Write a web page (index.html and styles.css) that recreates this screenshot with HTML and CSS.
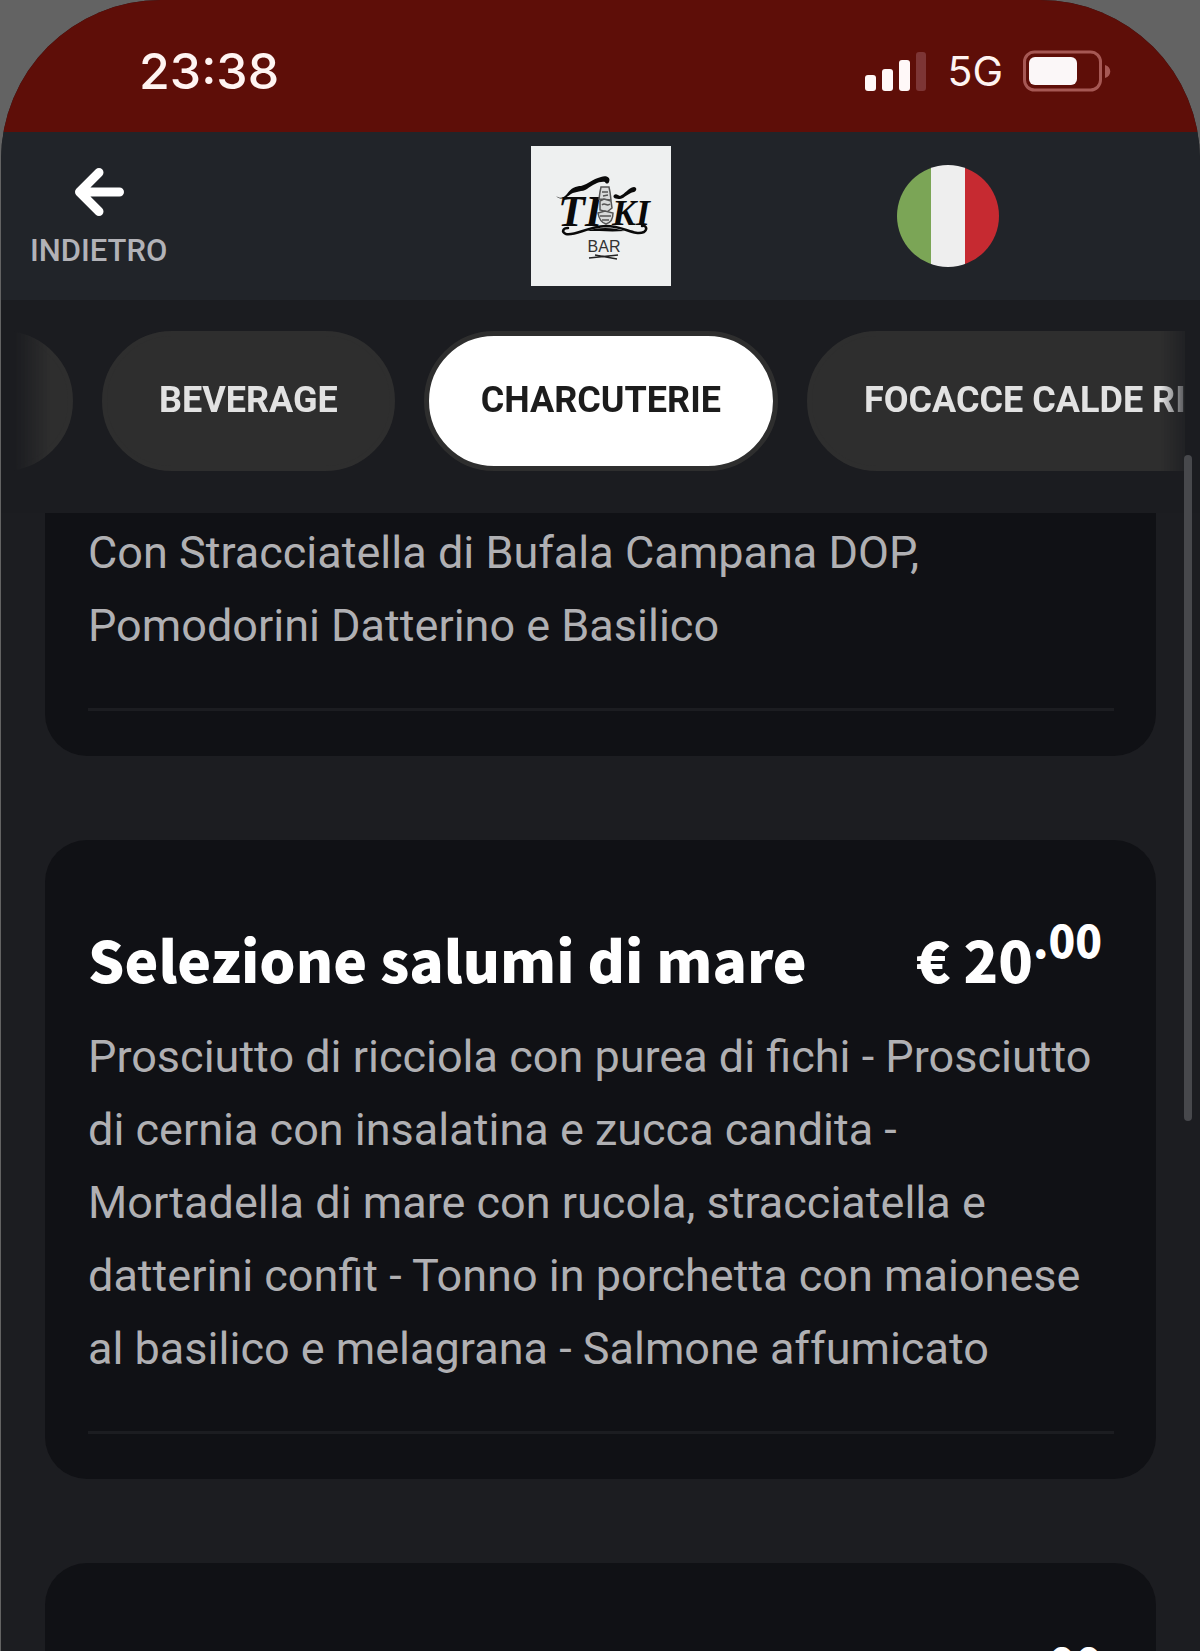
FILE: index.html
```
<!DOCTYPE html>
<html lang="it">
  <head>
    <meta charset="utf-8">
    <meta name="viewport" content="width=device-width, initial-scale=1">
    <title>Tiki Bar - Menu</title>
    <link rel="stylesheet" href="styles.css">
  </head>
  <body>
    <div class="screen">
      <div class="status-bar">
        <span class="status-time">23:38</span>
        <div class="status-icons">
          <svg class="signal" viewBox="0 0 62 40" aria-hidden="true">
            <rect x="0" y="24" width="11" height="16" rx="3" fill="#fff8f8"/>
            <rect x="17" y="18" width="11" height="22" rx="3" fill="#fff8f8"/>
            <rect x="34" y="9" width="11" height="31" rx="3" fill="#fff8f8"/>
            <rect x="51" y="1" width="10" height="39" rx="3" fill="#7d3535"/>
          </svg>
          <span class="network">5G</span>
          <svg class="battery" viewBox="0 0 88 42" aria-hidden="true">
            <rect x="1.5" y="2" width="76" height="38" rx="10" fill="none" stroke="#a65854" stroke-width="3"/>
            <rect x="6" y="7" width="48" height="28" rx="6" fill="#fbf7f8"/>
            <path d="M82 15c7 2 7 11 0 13z" fill="#a65854"/>
          </svg>
        </div>
      </div>

      <header class="header">
        <button class="back-btn">
          <svg class="back-icon" viewBox="0 0 50 50" aria-hidden="true">
            <path d="M25 5.500L5.500 25L25 44.500M7 25H45.500" fill="none" stroke="#fff" stroke-width="9" stroke-linecap="round" stroke-linejoin="round"/>
          </svg>
          <span>INDIETRO</span>
        </button>
        <a href="#" class="logo" aria-label="Tiki Bar">
          <svg viewBox="0 0 140 140">
            <rect width="140" height="140" fill="#eef0f0"/>
            <!-- lettering -->
            <g class="logo-letters">
              <text x="27" y="80" font-size="44">TI</text>
              <text x="81" y="79" font-size="36">KI</text>
            </g>
            <text class="logo-bar" x="73" y="106" font-size="16" text-anchor="middle">BAR</text>
            <!-- long brush over the T -->
            <path d="M25 50c4 3 8 2 11-2 4-6 9-8 14-8 8-2 11-7 20-9 6-2 10 1 8 5-1 2-3 2-4 0-6-1-12 3-18 7-5 3-11 2-16 5-5 4-10 7-15 2z" fill="#0a0a0a"/>
            <path d="M83 49c2-2 4 0 6 1 5-2 8-8 14-9 3 0 3 4 0 5-6 1-9 6-14 7-4 0-8-1-6-4z" fill="#0a0a0a"/>
            <!-- totem -->
            <g fill="#d8dada" stroke="#555" stroke-width="1.500">
              <path d="M70 41l8 0 1 5 1 8-12-1 1-7z"/>
              <path d="M69 55l4-2 7 2 1 7-5 4-7-2z"/>
              <path d="M67 67l7-2 8 2c0 6-3 10-7 11-4-1-7-5-8-11z"/>
              <path d="M71 46h6M72 50l5-1M71 59c3-3 5 2 8-1M69 70h11M71 74h7" fill="none"/>
            </g>
            <!-- brim -->
            <path d="M37 82c-5 0-7 4-2 6 10 2 20-7 40-8 18 0 28 10 38 6 4-3 2-7-2-6" fill="none" stroke="#0a0a0a" stroke-width="2.500" stroke-linecap="round"/>
            <path d="M56 85c10-4 26-4 38 0-12 1-26 0-38 0z" fill="#0a0a0a"/>
            <!-- sticks -->
            <path d="M58 112l29-3M64 109l22 4" stroke="#222" stroke-width="1.300" fill="none"/>
          </svg>
        </a>
        <button class="lang-btn" aria-label="Italiano"></button>
      </header>

      <nav class="categories">
        <div class="categories-track">
          <button class="pill pill-prev" aria-label="Categoria precedente"></button>
          <button class="pill">BEVERAGE</button>
          <button class="pill active">CHARCUTERIE</button>
          <button class="pill">FOCACCE CALDE RIPIENE</button>
        </div>
      </nav>

      <main class="menu-list">
        <article class="card card-first">
          <p class="description">Con Stracciatella di Bufala Campana DOP, Pomodorini Datterino e Basilico</p>
          <hr>
        </article>

        <article class="card">
          <div class="card-title">
            <h2>Selezione salumi di mare</h2>
            <span class="price">€ 20<sup>.00</sup></span>
          </div>
          <p class="description">Prosciutto di ricciola con purea di fichi - Prosciutto di cernia con insalatina e zucca candita - Mortadella di mare con rucola, stracciatella e datterini confit - Tonno in porchetta con maionese al basilico e melagrana - Salmone affumicato</p>
          <hr>
        </article>

        <article class="card">
          <div class="card-title">
            <span class="price">€ 20<sup>.00</sup></span>
          </div>
        </article>
      </main>

      <div class="scroll-thumb"></div>
    </div>
  </body>
</html>
```
FILE: styles.css
```
* {
  box-sizing: border-box;
}

body {
  margin: 0;
  background: #636363;
  font-family: Roboto, "Liberation Sans", sans-serif;
}

button {
  border: none;
  background: none;
  padding: 0;
  font-family: inherit;
  cursor: pointer;
}

.screen {
  position: relative;
  display: flex;
  flex-direction: column;
  height: 100vh;
  margin-left: 1px;
  overflow: hidden;
  background: #1c1d21;
  border-radius: 160px 160px 0 0;
}

/* status bar */
.status-bar {
  flex: none;
  display: flex;
  align-items: center;
  justify-content: space-between;
  height: 132px;
  padding: 10px 89px 0 138px;
  background: #5e0e08;
  color: #fff4f2;
  font-family: Inter, sans-serif;
}

.status-time {
  font-size: 50px;
  font-weight: 500;
}

.status-icons {
  display: flex;
  align-items: center;
  gap: 20px;
}

.signal {
  width: 62px;
  height: 40px;
}

.network {
  font-size: 41px;
}

.battery {
  width: 88px;
  height: 42px;
}

/* header */
.header {
  flex: none;
  display: grid;
  grid-template-columns: 1fr 140px 1fr;
  align-items: center;
  height: 168px;
  background: #212429;
}

.back-btn {
  justify-self: start;
  display: flex;
  flex-direction: column;
  align-items: center;
  gap: 16px;
  margin-left: 29px;
  padding-top: 3px;
  color: #b2b2b7;
  font-size: 31px;
  font-weight: 500;
  line-height: 36px;
}

.back-icon {
  width: 50px;
  height: 50px;
}

.logo svg {
  display: block;
  width: 140px;
  height: 140px;
}

.logo-letters {
  font-family: "Liberation Serif", serif;
  font-style: italic;
  font-weight: bold;
  fill: #0a0a0a;
}

.logo-bar {
  font-family: "Liberation Sans", sans-serif;
  fill: #333;
}

.lang-btn {
  justify-self: end;
  width: 102px;
  height: 102px;
  margin-right: 201px;
  border-radius: 50%;
  background: linear-gradient(to right, #7ba556 33%, #eee 33%, #eee 67%, #c62a31 67%);
}

/* categories */
.categories {
  flex: none;
  height: 213px;
  padding: 31px 15px 0 13px;
  background: #1b1c20;
}

.categories-track {
  display: flex;
  gap: 29px;
  overflow: hidden;
  -webkit-mask-image: linear-gradient(to right, transparent, #000 36px, #000 calc(100% - 24px), rgba(0, 0, 0, 0.3));
  mask-image: linear-gradient(to right, transparent, #000 36px, #000 calc(100% - 24px), rgba(0, 0, 0, 0.3));
}

.pill {
  flex: none;
  height: 140px;
  padding: 0 52px 2px;
  border: 5px solid #2e2e2e;
  border-radius: 70px;
  background: #2e2e2e;
  color: #e2e2e2;
  font-size: 36px;
  font-weight: 700;
  white-space: nowrap;
}

.pill-prev {
  width: 140px;
  margin-left: -81px;
}

.pill.active {
  background: #fff;
  color: #1c1c1c;
}

/* dishes */
.menu-list {
  flex: 1;
  min-height: 0;
  display: flex;
  flex-direction: column;
  gap: 84px;
  padding: 0 44px;
  overflow: hidden;
}

.card {
  flex: none;
  padding: 74px 42px 45px 43px;
  border-radius: 42px;
  background: #101115;
}

.card-first {
  padding-top: 3px;
  border-radius: 0 0 42px 42px;
}

.card-title {
  display: flex;
  justify-content: space-between;
  margin-bottom: 18px;
  padding-right: 12px;
  color: #fff;
  font-family: "Noto Sans CJK JP", sans-serif;
  font-size: 57px;
  font-weight: 900;
  line-height: 88px;
}

.card-title h2 {
  margin: 0;
  font-size: inherit;
  font-weight: inherit;
}

.price {
  margin-left: auto;
}

.price sup {
  font-size: 44px;
  line-height: 0;
  vertical-align: 25px;
}

.description {
  margin: 0;
  color: #b0b0b3;
  font-size: 45px;
  line-height: 73px;
}

.card hr {
  height: 3px;
  margin: 46px 0 0;
  border: none;
  background: #1c1d21;
}

.scroll-thumb {
  position: absolute;
  top: 455px;
  right: 8px;
  width: 8px;
  height: 666px;
  border-radius: 4px;
  background: #47484c;
}
```
